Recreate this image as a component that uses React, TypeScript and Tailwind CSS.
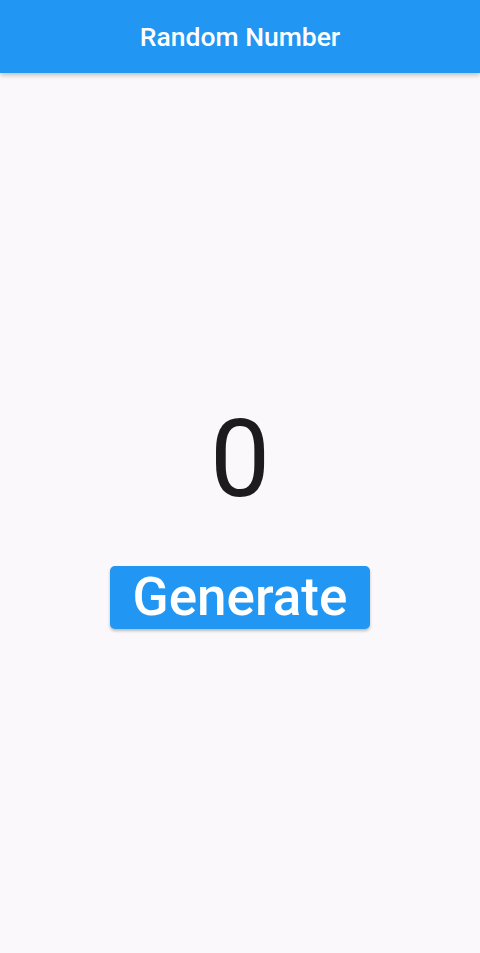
import { useState } from "react";

const App = () => {
    const [value, setValue] = useState<number>(0);

    return (
        <div className="min-h-screen flex flex-col bg-[#faf8fa] font-['Roboto',sans-serif]">
            <header className="h-[73px] shrink-0 bg-[#2196f3] flex items-center justify-center shadow-[0_2px_5px_rgba(0,0,0,0.25)] z-10">
                <h1 className="text-white text-[26.5px] font-medium">Random Number</h1>
            </header>
            <main className="flex-1 flex flex-col items-center justify-center gap-[44px]">
                <p className="text-[107px] leading-[125px] text-[#1d1b1e]">{value}</p>
                <button
                    onClick={() => setValue(Math.floor(Math.random() * 100))}
                    className="w-[260px] h-[63px] rounded-[5px] bg-[#2196f3] text-white text-[53px] leading-none font-medium flex items-center justify-center shadow-[0_2px_3px_rgba(0,0,0,0.25)]"
                >
                    Generate
                </button>
            </main>
        </div>
    )
}

export default App
